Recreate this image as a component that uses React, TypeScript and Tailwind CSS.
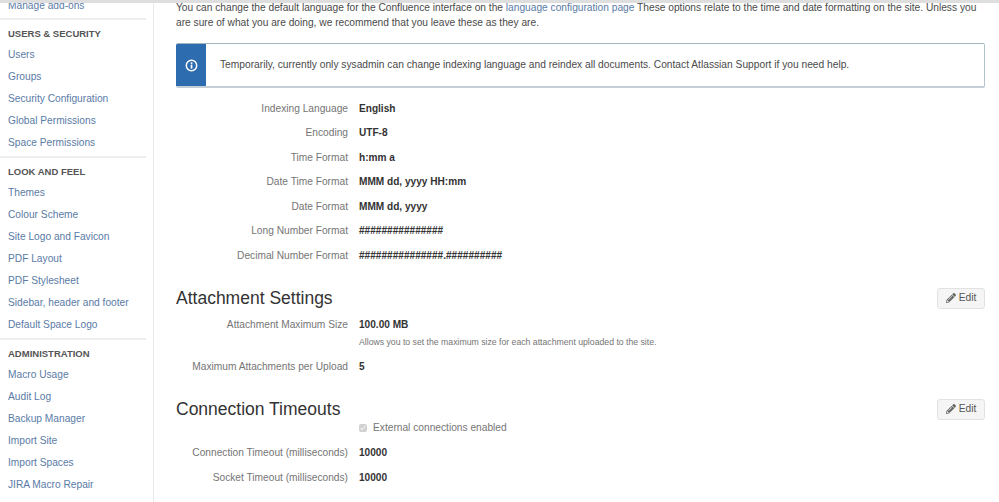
import { FaPencilAlt } from "react-icons/fa";

const sections = [
  { title: "USERS & SECURITY", links: ["Users", "Groups", "Security Configuration", "Global Permissions", "Space Permissions"] },
  { title: "LOOK AND FEEL", links: ["Themes", "Colour Scheme", "Site Logo and Favicon", "PDF Layout", "PDF Stylesheet", "Sidebar, header and footer", "Default Space Logo"] },
  { title: "ADMINISTRATION", links: ["Macro Usage", "Audit Log", "Backup Manager", "Import Site", "Import Spaces", "JIRA Macro Repair"] },
];

const formats = [
  ["Indexing Language", "English"],
  ["Encoding", "UTF-8"],
  ["Time Format", "h:mm a"],
  ["Date Time Format", "MMM dd, yyyy HH:mm"],
  ["Date Format", "MMM dd, yyyy"],
  ["Long Number Format", "###############"],
  ["Decimal Number Format", "###############.##########"],
];

function Row({ label, value, className = "h-[24.5px]" }: { label: string; value: string; className?: string }) {
  return (
    <div className={`flex items-center ${className}`}>
      <div className="w-[172px] text-right text-[#757575]">{label}</div>
      <div className="ml-[11px] text-[10.1px] font-bold text-[#333333]">{value}</div>
    </div>
  );
}

function SectionHead({ title }: { title: string }) {
  return (
    <div className="flex h-[22px] items-start justify-between">
      <h2 className="text-[17.5px] leading-[20px] text-[#333333]">{title}</h2>
      <button className="flex h-[21px] w-[48px] items-center justify-center gap-[3px] rounded-[3px] border border-[#e2e2e2] bg-[#f5f5f5] text-[#555555]">
        <FaPencilAlt className="text-[10px] text-[#666666]" />
        Edit
      </button>
    </div>
  );
}

export default function App() {
  return (
    <div className="relative flex h-[502px] w-[999px] overflow-hidden bg-white font-['Liberation_Sans',Arial,sans-serif] text-[10.2px] text-[#4a4a4a]">
      <div className="absolute inset-x-0 top-0 h-[3px] bg-[#dedede]" />

      <aside className="h-full w-[154px] shrink-0 border-r border-[#e8e8e8]">
        <div className="flex h-[20px] w-[146px] items-end border-b-2 border-[#eeeeee] pb-[6px] pl-[8px] leading-[13px] text-[#5a7ba6]">
          Manage add-ons
        </div>
        {sections.map((section, i) => (
          <div key={section.title} className={`w-[146px] pl-[8px] ${i < 2 ? "border-b-2 border-[#eeeeee] pb-[2px]" : ""}`}>
            <div className="flex h-[21px] items-end text-[9.5px] font-bold text-[#555555]">{section.title}</div>
            <div className="pt-[3px]">
              {section.links.map((link) => (
                <div key={link} className="flex h-[22px] items-center text-[#5a7ba6]">
                  {link}
                </div>
              ))}
            </div>
          </div>
        ))}
      </aside>

      <main className="ml-[22px] w-[809px] shrink-0">
        <p className="leading-[15px] text-[#4a4a4a]">
          You can change the default language for the Confluence interface on the{" "}
          <span className="text-[#5a7ba6]">language configuration page</span> These options relate to the time and date
          formatting on the site. Unless you are sure of what you are doing, we recommend that you leave these as they are.
        </p>

        <div className="mt-[13px] flex h-[45px] overflow-hidden rounded-[2px] border border-t-[#9fb5bf] border-r-[#b4c4cc] border-b-2 border-b-[#c5ced6] border-l-0">
          <div className="flex w-[30px] items-center justify-center bg-[#2e6cb0]">
            <svg width="13" height="13" viewBox="0 0 13 13" fill="none">
              <circle cx="6.5" cy="6.5" r="5.2" stroke="white" strokeWidth="1.5" />
              <rect x="5.7" y="5.6" width="1.7" height="4" fill="white" />
              <rect x="5.7" y="3.3" width="1.7" height="1.6" fill="white" />
            </svg>
          </div>
          <div className="flex flex-1 items-center pl-[14px] text-[10.23px] text-[#4a4a4a]">
            Temporarily, currently only sysadmin can change indexing language and reindex all documents. Contact Atlassian
            Support if you need help.
          </div>
        </div>

        <div className="mt-[8px]">
          {formats.map(([label, value]) => (
            <Row key={label} label={label} value={value} />
          ))}
        </div>

        <div className="mt-[20px]">
          <SectionHead title="Attachment Settings" />
        </div>
        <div className="mt-[3px]">
          <Row label="Attachment Maximum Size" value="100.00 MB" className="h-[24px]" />
          <div className="ml-[183px] text-[8.7px] leading-[11px] text-[#757575]">
            Allows you to set the maximum size for each attachment uploaded to the site.
          </div>
          <Row label="Maximum Attachments per Upload" value="5" className="mt-[7px] h-[24px]" />
        </div>

        <div className="mt-[20px]">
          <SectionHead title="Connection Timeouts" />
        </div>
        <div className="ml-[183px] flex h-[15px] items-center gap-[6px] text-[#757575]">
          <input type="checkbox" checked disabled readOnly className="m-0 h-[8px] w-[8px] accent-[#c8c8c8]" />
          External connections enabled
        </div>
        <div className="mt-[5px]">
          <Row label="Connection Timeout (milliseconds)" value="10000" />
          <Row label="Socket Timeout (milliseconds)" value="10000" />
        </div>
      </main>
    </div>
  );
}
